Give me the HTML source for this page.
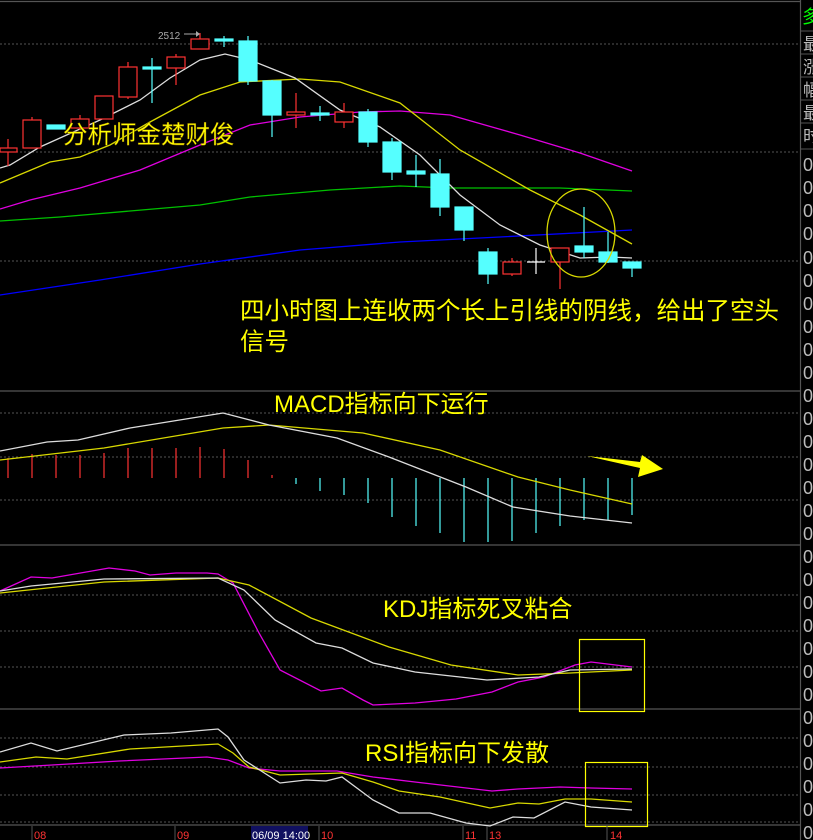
<!DOCTYPE html>
<html><head><meta charset="utf-8"><style>
body{margin:0;background:#000;width:813px;height:840px;overflow:hidden}
svg{display:block}
text{font-family:"Liberation Sans","Noto Sans CJK SC",sans-serif}
</style></head><body>
<svg width="813" height="840" viewBox="0 0 813 840" xmlns="http://www.w3.org/2000/svg">
<rect width="813" height="840" fill="#000"/>
<g stroke="#555" stroke-width="1.2" fill="none">
<line x1="0" y1="1.5" x2="800" y2="1.5"/>
<line x1="0" y1="391" x2="800" y2="391"/>
<line x1="0" y1="545" x2="800" y2="545"/>
<line x1="0" y1="709" x2="800" y2="709"/>
<line x1="0" y1="825" x2="800" y2="825"/>
<line x1="800.5" y1="0" x2="800.5" y2="840"/>
</g>
<g stroke="#555" stroke-width="1" stroke-dasharray="2,2">
<line x1="0" y1="44" x2="800" y2="44"/><line x1="0" y1="152" x2="800" y2="152"/><line x1="0" y1="261" x2="800" y2="261"/>
<line x1="0" y1="413" x2="800" y2="413"/><line x1="0" y1="457" x2="800" y2="457"/><line x1="0" y1="500" x2="800" y2="500"/>
<line x1="0" y1="595" x2="800" y2="595"/><line x1="0" y1="631" x2="800" y2="631"/><line x1="0" y1="667" x2="800" y2="667"/>
<line x1="0" y1="738" x2="800" y2="738"/><line x1="0" y1="767" x2="800" y2="767"/><line x1="0" y1="795" x2="800" y2="795"/><line x1="0" y1="822" x2="800" y2="822"/>
</g>
<g fill="none" stroke-width="1.3">
<polyline stroke="#0000ff" points="0,295 100,280 200,264 300,250 400,242 500,237 632,230"/>
<polyline stroke="#00c000" points="0,221 60,217 130,211 200,205 250,197 330,190 400,186 450,188 500,188 560,188 632,191"/>
<polyline stroke="#e000e0" points="0,209 30,200 80,188 140,170 200,145 250,125 300,117 360,112 400,111 450,115 520,135 580,153 632,171"/>
<polyline stroke="#d8d800" points="0,183 50,162 80,157 110,145 150,122 200,95 240,82 300,79 340,82 400,103 460,150 530,190 580,215 632,244"/>
<polyline stroke="#ddd" points="0,168 10,165 40,147 100,120 140,100 170,78 200,60 225,54 250,60 295,78 340,110 380,127 420,155 460,195 500,225 540,245 580,258 610,257 632,258"/>
</g>
<g stroke="#ff3333" stroke-width="1.2" fill="#000">
<line x1="8" y1="139" x2="8" y2="166"/><rect x="0" y="148" width="17" height="4"/>
<line x1="32" y1="117" x2="32" y2="120"/><rect x="23" y="120" width="18" height="28"/>
<line x1="80" y1="115" x2="80" y2="130"/><rect x="71" y="119" width="18" height="9"/>
<rect x="95" y="96" width="18" height="23"/>
<line x1="128" y1="62" x2="128" y2="99"/><rect x="119" y="67" width="18" height="30"/>
<line x1="176" y1="54" x2="176" y2="85"/><rect x="167" y="57" width="18" height="11"/>
<line x1="200" y1="33" x2="200" y2="39"/><rect x="191" y="39" width="18" height="10"/>
<line x1="296" y1="93" x2="296" y2="128"/><rect x="287" y="112" width="18" height="3"/>
<line x1="344" y1="103" x2="344" y2="128"/><rect x="335" y="112" width="18" height="10"/>
<line x1="512" y1="258" x2="512" y2="276"/><rect x="503" y="262" width="18" height="12"/>
<line x1="560" y1="262" x2="560" y2="289"/><rect x="551" y="248" width="18" height="14"/>
</g>
<g stroke="#55ffff" stroke-width="1.2" fill="#55ffff">
<rect x="47" y="125" width="18" height="4"/>
<line x1="152" y1="58" x2="152" y2="103"/><rect x="143" y="67" width="18" height="2"/>
<line x1="224" y1="36" x2="224" y2="47"/><rect x="215" y="39" width="18" height="2"/>
<line x1="248" y1="36" x2="248" y2="85"/><rect x="239" y="41" width="18" height="40"/>
<line x1="272" y1="80" x2="272" y2="137"/><rect x="263" y="81" width="18" height="34"/>
<line x1="320" y1="106" x2="320" y2="121"/><rect x="311" y="113" width="18" height="2"/>
<line x1="368" y1="109" x2="368" y2="147"/><rect x="359" y="112" width="18" height="30"/>
<line x1="392" y1="138" x2="392" y2="180"/><rect x="383" y="142" width="18" height="30"/>
<line x1="416" y1="155" x2="416" y2="187"/><rect x="407" y="171" width="18" height="3"/>
<line x1="440" y1="159" x2="440" y2="216"/><rect x="431" y="174" width="18" height="33"/>
<line x1="464" y1="207" x2="464" y2="241"/><rect x="455" y="207" width="18" height="23"/>
<line x1="488" y1="248" x2="488" y2="284"/><rect x="479" y="252" width="18" height="22"/>
<line x1="584" y1="207" x2="584" y2="258"/><rect x="575" y="246" width="18" height="6"/>
<line x1="608" y1="232" x2="608" y2="263"/><rect x="599" y="252" width="18" height="10"/>
<line x1="632" y1="262" x2="632" y2="277"/><rect x="623" y="262" width="18" height="6"/>
</g>
<g stroke="#fff" stroke-width="1.2"><line x1="536" y1="248" x2="536" y2="274"/><line x1="527" y1="262" x2="545" y2="262"/></g>
<ellipse cx="581" cy="233" rx="34" ry="44" fill="none" stroke="#d8d800" stroke-width="1.3"/>
<text x="158" y="39" font-size="10" fill="#aaa">2512</text>
<line x1="184" y1="34" x2="198" y2="34" stroke="#aaa"/><path d="M196,31 L200,34 L196,37Z" fill="#aaa"/>
<text x="63" y="143" font-size="24.5" fill="#ffff00" stroke="#886600" stroke-width="0.4">分析师金楚财俊</text>
<text x="240" y="319" font-size="24.5" fill="#ffff00">四小时图上连收两个长上引线的阴线，给出了空头</text>
<text x="240" y="350" font-size="24.5" fill="#ffff00">信号</text>
<g stroke="#ff3333" stroke-width="1.2">
<line x1="8" y1="458" x2="8" y2="478"/><line x1="32" y1="454" x2="32" y2="478"/><line x1="56" y1="455" x2="56" y2="478"/><line x1="80" y1="455" x2="80" y2="478"/><line x1="104" y1="453" x2="104" y2="478"/><line x1="128" y1="448" x2="128" y2="478"/><line x1="152" y1="448" x2="152" y2="478"/><line x1="176" y1="448" x2="176" y2="478"/><line x1="200" y1="447" x2="200" y2="478"/><line x1="224" y1="449" x2="224" y2="478"/><line x1="248" y1="460" x2="248" y2="478"/><line x1="272" y1="475" x2="272" y2="478"/>
</g>
<g stroke="#55ffff" stroke-width="1.2">
<line x1="296" y1="478" x2="296" y2="484"/><line x1="320" y1="478" x2="320" y2="491"/><line x1="344" y1="478" x2="344" y2="495"/><line x1="368" y1="478" x2="368" y2="503"/><line x1="392" y1="478" x2="392" y2="517"/><line x1="416" y1="478" x2="416" y2="526"/><line x1="440" y1="478" x2="440" y2="533"/><line x1="464" y1="478" x2="464" y2="542"/><line x1="488" y1="478" x2="488" y2="542"/><line x1="512" y1="478" x2="512" y2="541"/><line x1="536" y1="478" x2="536" y2="533"/><line x1="560" y1="478" x2="560" y2="526"/><line x1="584" y1="478" x2="584" y2="520"/><line x1="608" y1="478" x2="608" y2="520"/><line x1="632" y1="478" x2="632" y2="515"/>
</g>
<g fill="none" stroke-width="1.3">
<polyline stroke="#d8d800" points="0,460 104,448 223,428 269,425 363,433 440,450 518,477 570,490 632,504"/>
<polyline stroke="#ddd" points="0,451 47,442 78,440 130,428 223,413 269,425 337,438 389,457 466,487 513,507 570,516 632,523"/>
</g>
<path d="M587,456 L640,462 L642,455 L663,469 L638,477 L640,468 Z" fill="#ffff00"/>
<text x="274" y="412" font-size="24" fill="#ffff00">MACD指标向下运行</text>
<g fill="none" stroke-width="1.3">
<polyline stroke="#e000e0" points="0,591 31,577 52,578 109,568 135,571 150,575 176,573 207,573 218,574 233,583 259,633 280,670 321,691 342,688 363,700 373,705 415,703 456,699 492,692 518,682 544,677 575,665 591,662 632,667"/>
<polyline stroke="#d8d800" points="0,593 104,582 218,578 249,585 311,618 389,647 451,665 518,675 570,673 632,670"/>
<polyline stroke="#ddd" points="0,591 31,586 104,579 218,578 244,590 275,620 316,643 342,648 373,663 415,672 487,680 539,677 570,670 632,669"/>
</g>
<rect x="579.5" y="639.5" width="65" height="72" fill="none" stroke="#ffff00" stroke-width="1.2"/>
<text x="383" y="617" font-size="24" fill="#ffff00">KDJ指标死叉粘合</text>
<g fill="none" stroke-width="1.3">
<polyline stroke="#e000e0" points="0,768 52,765 119,761 207,757 228,760 249,768 280,771 337,771 373,777 415,782 492,791 518,789 560,787 591,788 632,789"/>
<polyline stroke="#d8d800" points="0,762 36,757 67,759 130,749 218,744 233,753 249,767 280,775 342,773 373,782 399,791 440,797 490,808 518,803 539,804 565,799 591,799 632,802"/>
<polyline stroke="#ddd" points="0,752 31,743 57,751 124,735 171,733 218,729 228,737 244,760 280,783 306,780 326,781 342,777 373,800 399,813 430,813 466,823 490,826 513,817 534,818 565,802 591,807 632,810"/>
</g>
<rect x="585.5" y="762.5" width="62" height="64" fill="none" stroke="#ffff00" stroke-width="1.2"/>
<text x="365" y="761" font-size="24" fill="#ffff00">RSI指标向下发散</text>
<g stroke="#555"><line x1="32" y1="826" x2="32" y2="840"/><line x1="175" y1="826" x2="175" y2="840"/><line x1="319" y1="826" x2="319" y2="840"/><line x1="463" y1="826" x2="463" y2="840"/><line x1="487" y1="826" x2="487" y2="840"/><line x1="607" y1="826" x2="607" y2="840"/></g>
<rect x="251" y="826" width="57" height="14" fill="#101060"/>
<g font-size="11" fill="#ff3333">
<text x="34" y="839">08</text><text x="177" y="839">09</text><text x="321" y="839">10</text><text x="465" y="839">11</text><text x="489" y="839">13</text><text x="610" y="839">14</text>
</g>
<text x="252" y="839" font-size="11" fill="#fff">06/09 14:00</text>
<g stroke="#555"><line x1="800" y1="31" x2="813" y2="31"/><line x1="800" y1="54" x2="813" y2="54"/><line x1="800" y1="77" x2="813" y2="77"/><line x1="800" y1="100" x2="813" y2="100"/><line x1="800" y1="123" x2="813" y2="123"/><line x1="800" y1="149" x2="813" y2="149"/></g>
<text x="802" y="23" font-size="18" fill="#00ff00">多</text>
<g font-size="17" fill="#bbb">
<text x="803" y="50">最</text><text x="803" y="73">涨</text><text x="803" y="96">幅</text><text x="803" y="119">最</text><text x="803" y="142">时</text>
</g>
<g font-size="18" fill="#bbb">
<text x="803" y="171">0</text><text x="803" y="194">0</text><text x="803" y="217">0</text><text x="803" y="240">0</text><text x="803" y="264">0</text><text x="803" y="287">0</text><text x="803" y="310">0</text><text x="803" y="333">0</text><text x="803" y="356">0</text><text x="803" y="379">0</text><text x="803" y="402">0</text><text x="803" y="425">0</text><text x="803" y="448">0</text><text x="803" y="471">0</text><text x="803" y="494">0</text><text x="803" y="517">0</text><text x="803" y="540">0</text><text x="803" y="563">0</text><text x="803" y="586">0</text><text x="803" y="609">0</text><text x="803" y="632">0</text><text x="803" y="655">0</text><text x="803" y="678">0</text><text x="803" y="701">0</text><text x="803" y="724">0</text><text x="803" y="747">0</text><text x="803" y="770">0</text><text x="803" y="793">0</text><text x="803" y="816">0</text><text x="803" y="839">0</text>
</g>
</svg>
</body></html>
